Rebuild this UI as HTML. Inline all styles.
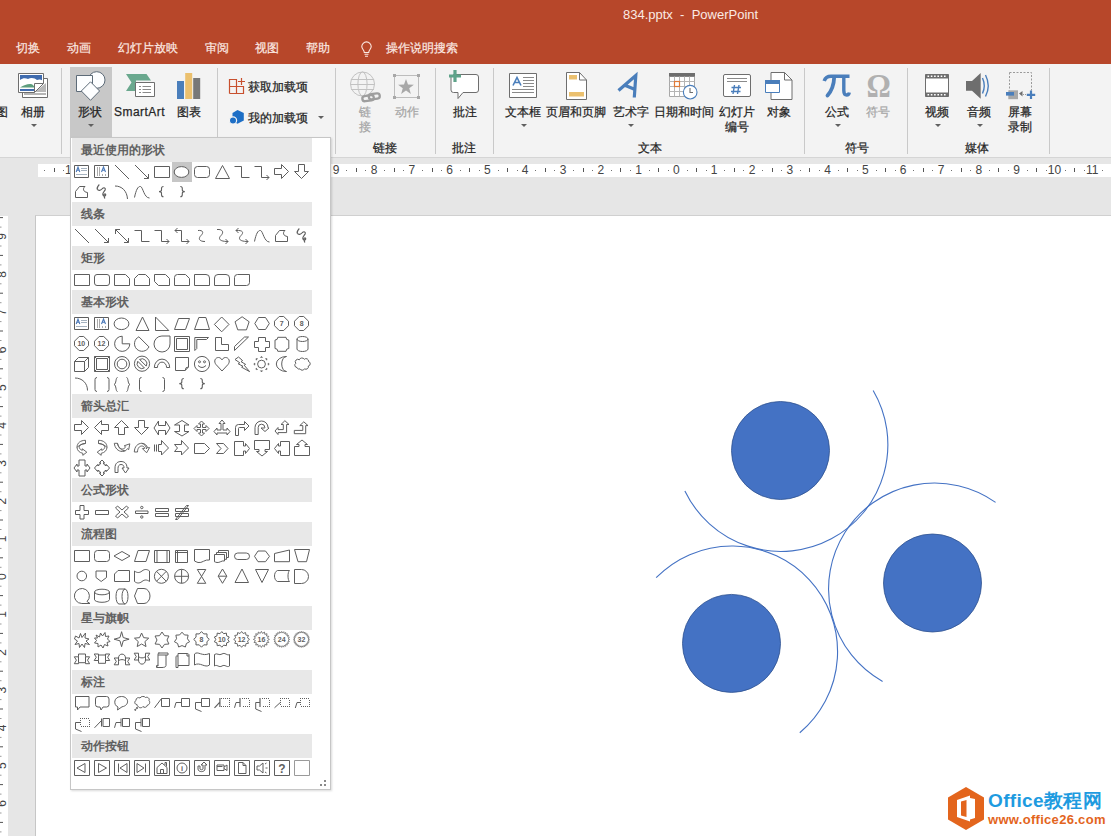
<!DOCTYPE html><html><head><meta charset="utf-8"><style>
*{box-sizing:border-box}
html,body{margin:0;padding:0}
body{width:1111px;height:836px;overflow:hidden;position:relative;background:#E6E6E6;font-family:"Liberation Sans",sans-serif;}
.a{position:absolute;white-space:nowrap}
.t12{font-size:12px;line-height:12px;color:#262626;-webkit-text-stroke:0.25px #262626}
.dis{color:#A6A6A6;-webkit-text-stroke:0.25px #A6A6A6}
.tab{font-size:12px;line-height:12px;color:#FBE9E3;-webkit-text-stroke:0.2px #FBE9E3}
.sep{position:absolute;width:1px;background:#C9C9C9}
.arr{position:absolute;width:0;height:0;border-left:3px solid transparent;border-right:3px solid transparent;border-top:3px solid #606060}
.hdr{position:absolute;left:72px;width:240px;height:24px;background:#E8E8E8;}
.hdr span{position:absolute;left:9px;top:6px;font-size:12px;line-height:12px;font-weight:bold;color:#606060}
</style></head><body>
<div class="a" style="left:0;top:0;width:1111px;height:64px;background:#B7472A"></div>
<div class="a" style="left:623px;top:8px;font-size:13px;line-height:14px;color:#FBEAE4">834.pptx&nbsp;&nbsp;-&nbsp;&nbsp;PowerPoint</div>
<div class="a tab" style="left:16px;top:42px">切换</div>
<div class="a tab" style="left:67px;top:42px">动画</div>
<div class="a tab" style="left:118px;top:42px">幻灯片放映</div>
<div class="a tab" style="left:205px;top:42px">审阅</div>
<div class="a tab" style="left:255px;top:42px">视图</div>
<div class="a tab" style="left:306px;top:42px">帮助</div>
<div class="a tab" style="left:386px;top:42px">操作说明搜索</div>
<svg class="a" style="left:357px;top:41px" width="20" height="18" viewBox="0 0 20 18"><path d="M7.3 11.5 C7.3 9 4.8 8 4.8 5.6 A4.7 4.7 0 0 1 14.2 5.6 C14.2 8 11.7 9 11.7 11.5 Z" fill="none" stroke="#FBE9E3" stroke-width="1.1"/><path d="M7.5 13.3 H11.5 M8 15.3 H11" stroke="#FBE9E3" stroke-width="1.1"/></svg>
<div class="a" style="left:0;top:64px;width:1111px;height:94px;background:#F3F3F3;border-bottom:1px solid #D5D5D5"></div>
<div class="sep" style="left:61px;top:68px;height:86px"></div>
<div class="sep" style="left:217px;top:68px;height:86px"></div>
<div class="sep" style="left:335px;top:68px;height:86px"></div>
<div class="sep" style="left:435px;top:68px;height:86px"></div>
<div class="sep" style="left:493px;top:68px;height:86px"></div>
<div class="sep" style="left:804px;top:68px;height:86px"></div>
<div class="sep" style="left:907px;top:68px;height:86px"></div>
<div class="sep" style="left:1049px;top:68px;height:86px"></div>
<div class="a" style="left:70px;top:67px;width:42px;height:71px;background:#C8C8C8"></div>
<div class="a t12" style="left:-4px;top:106px">图</div>
<div class="a t12" style="left:21px;top:106px">相册</div>
<div class="arr" style="left:31px;top:124px"></div>
<div class="a t12" style="left:78px;top:106px">形状</div>
<div class="arr" style="left:88px;top:124px"></div>
<div class="a t12" style="left:114px;top:106px;letter-spacing:0.45px">SmartArt</div>
<div class="a t12" style="left:177px;top:106px">图表</div>
<div class="a t12" style="left:248px;top:81px">获取加载项</div>
<div class="a t12" style="left:248px;top:112px">我的加载项</div>
<div class="arr" style="left:318px;top:116px"></div>
<div class="a t12 dis" style="left:359px;top:106px">链</div>
<div class="a t12 dis" style="left:359px;top:121px">接</div>
<div class="a t12 dis" style="left:395px;top:106px">动作</div>
<div class="a t12" style="left:373px;top:142px">链接</div>
<div class="a t12" style="left:453px;top:106px">批注</div>
<div class="a t12" style="left:452px;top:142px">批注</div>
<div class="a t12" style="left:505px;top:106px">文本框</div>
<div class="arr" style="left:521px;top:124px"></div>
<div class="a t12" style="left:546px;top:106px">页眉和页脚</div>
<div class="a t12" style="left:613px;top:106px">艺术字</div>
<div class="arr" style="left:628px;top:124px"></div>
<div class="a t12" style="left:654px;top:106px">日期和时间</div>
<div class="a t12" style="left:719px;top:106px">幻灯片</div>
<div class="a t12" style="left:725px;top:121px">编号</div>
<div class="a t12" style="left:767px;top:106px">对象</div>
<div class="a t12" style="left:638px;top:142px">文本</div>
<div class="a t12" style="left:825px;top:106px">公式</div>
<div class="arr" style="left:835px;top:124px"></div>
<div class="a t12 dis" style="left:866px;top:106px">符号</div>
<div class="a t12" style="left:845px;top:142px">符号</div>
<div class="a t12" style="left:925px;top:106px">视频</div>
<div class="arr" style="left:935px;top:124px"></div>
<div class="a t12" style="left:967px;top:106px">音频</div>
<div class="arr" style="left:977px;top:124px"></div>
<div class="a t12" style="left:1008px;top:106px">屏幕</div>
<div class="a t12" style="left:1008px;top:121px">录制</div>
<div class="a t12" style="left:965px;top:142px">媒体</div>
<div class="a" style="left:38px;top:164px;width:1073px;height:13px;background:#FFFFFF"></div>
<div class="a" style="left:35px;top:215px;width:1076px;height:621px;background:#FFFFFF;border-left:1px solid #C6C6C6;border-top:1px solid #D0D0D0"></div>
<div class="a" style="left:0;top:216px;width:8px;height:620px;background:#FFFFFF"></div>
<svg class="a" style="left:0;top:164px" width="1111" height="13" viewBox="0 164 1111 13"><rect x="44" y="170" width="1" height="1" fill="#707070"/><rect x="54" y="168" width="1" height="4" fill="#555"/><rect x="63" y="170" width="1" height="1" fill="#707070"/><text x="71.6" y="173.8" font-family="Liberation Sans" font-size="12" fill="#444" text-anchor="middle">16</text><rect x="82" y="170" width="1" height="1" fill="#707070"/><rect x="91" y="168" width="1" height="4" fill="#555"/><rect x="101" y="170" width="1" height="1" fill="#707070"/><text x="109.4" y="173.8" font-family="Liberation Sans" font-size="12" fill="#444" text-anchor="middle">15</text><rect x="120" y="170" width="1" height="1" fill="#707070"/><rect x="129" y="168" width="1" height="4" fill="#555"/><rect x="139" y="170" width="1" height="1" fill="#707070"/><text x="147.2" y="173.8" font-family="Liberation Sans" font-size="12" fill="#444" text-anchor="middle">14</text><rect x="157" y="170" width="1" height="1" fill="#707070"/><rect x="167" y="168" width="1" height="4" fill="#555"/><rect x="176" y="170" width="1" height="1" fill="#707070"/><text x="185.0" y="173.8" font-family="Liberation Sans" font-size="12" fill="#444" text-anchor="middle">13</text><rect x="195" y="170" width="1" height="1" fill="#707070"/><rect x="205" y="168" width="1" height="4" fill="#555"/><rect x="214" y="170" width="1" height="1" fill="#707070"/><text x="222.8" y="173.8" font-family="Liberation Sans" font-size="12" fill="#444" text-anchor="middle">12</text><rect x="233" y="170" width="1" height="1" fill="#707070"/><rect x="243" y="168" width="1" height="4" fill="#555"/><rect x="252" y="170" width="1" height="1" fill="#707070"/><text x="260.6" y="173.8" font-family="Liberation Sans" font-size="12" fill="#444" text-anchor="middle">11</text><rect x="271" y="170" width="1" height="1" fill="#707070"/><rect x="280" y="168" width="1" height="4" fill="#555"/><rect x="290" y="170" width="1" height="1" fill="#707070"/><text x="298.4" y="173.8" font-family="Liberation Sans" font-size="12" fill="#444" text-anchor="middle">10</text><rect x="309" y="170" width="1" height="1" fill="#707070"/><rect x="318" y="168" width="1" height="4" fill="#555"/><rect x="328" y="170" width="1" height="1" fill="#707070"/><text x="336.2" y="173.8" font-family="Liberation Sans" font-size="12" fill="#444" text-anchor="middle">9</text><rect x="346" y="170" width="1" height="1" fill="#707070"/><rect x="356" y="168" width="1" height="4" fill="#555"/><rect x="365" y="170" width="1" height="1" fill="#707070"/><text x="374.0" y="173.8" font-family="Liberation Sans" font-size="12" fill="#444" text-anchor="middle">8</text><rect x="384" y="170" width="1" height="1" fill="#707070"/><rect x="394" y="168" width="1" height="4" fill="#555"/><rect x="403" y="170" width="1" height="1" fill="#707070"/><text x="411.8" y="173.8" font-family="Liberation Sans" font-size="12" fill="#444" text-anchor="middle">7</text><rect x="422" y="170" width="1" height="1" fill="#707070"/><rect x="432" y="168" width="1" height="4" fill="#555"/><rect x="441" y="170" width="1" height="1" fill="#707070"/><text x="449.6" y="173.8" font-family="Liberation Sans" font-size="12" fill="#444" text-anchor="middle">6</text><rect x="460" y="170" width="1" height="1" fill="#707070"/><rect x="469" y="168" width="1" height="4" fill="#555"/><rect x="479" y="170" width="1" height="1" fill="#707070"/><text x="487.4" y="173.8" font-family="Liberation Sans" font-size="12" fill="#444" text-anchor="middle">5</text><rect x="498" y="170" width="1" height="1" fill="#707070"/><rect x="507" y="168" width="1" height="4" fill="#555"/><rect x="517" y="170" width="1" height="1" fill="#707070"/><text x="525.2" y="173.8" font-family="Liberation Sans" font-size="12" fill="#444" text-anchor="middle">4</text><rect x="535" y="170" width="1" height="1" fill="#707070"/><rect x="545" y="168" width="1" height="4" fill="#555"/><rect x="554" y="170" width="1" height="1" fill="#707070"/><text x="563.0" y="173.8" font-family="Liberation Sans" font-size="12" fill="#444" text-anchor="middle">3</text><rect x="573" y="170" width="1" height="1" fill="#707070"/><rect x="583" y="168" width="1" height="4" fill="#555"/><rect x="592" y="170" width="1" height="1" fill="#707070"/><text x="600.8" y="173.8" font-family="Liberation Sans" font-size="12" fill="#444" text-anchor="middle">2</text><rect x="611" y="170" width="1" height="1" fill="#707070"/><rect x="620" y="168" width="1" height="4" fill="#555"/><rect x="630" y="170" width="1" height="1" fill="#707070"/><text x="638.6" y="173.8" font-family="Liberation Sans" font-size="12" fill="#444" text-anchor="middle">1</text><rect x="649" y="170" width="1" height="1" fill="#707070"/><rect x="658" y="168" width="1" height="4" fill="#555"/><rect x="668" y="170" width="1" height="1" fill="#707070"/><text x="676.4" y="173.8" font-family="Liberation Sans" font-size="12" fill="#444" text-anchor="middle">0</text><rect x="687" y="170" width="1" height="1" fill="#707070"/><rect x="696" y="168" width="1" height="4" fill="#555"/><rect x="706" y="170" width="1" height="1" fill="#707070"/><text x="714.2" y="173.8" font-family="Liberation Sans" font-size="12" fill="#444" text-anchor="middle">1</text><rect x="724" y="170" width="1" height="1" fill="#707070"/><rect x="734" y="168" width="1" height="4" fill="#555"/><rect x="743" y="170" width="1" height="1" fill="#707070"/><text x="752.0" y="173.8" font-family="Liberation Sans" font-size="12" fill="#444" text-anchor="middle">2</text><rect x="762" y="170" width="1" height="1" fill="#707070"/><rect x="772" y="168" width="1" height="4" fill="#555"/><rect x="781" y="170" width="1" height="1" fill="#707070"/><text x="789.8" y="173.8" font-family="Liberation Sans" font-size="12" fill="#444" text-anchor="middle">3</text><rect x="800" y="170" width="1" height="1" fill="#707070"/><rect x="809" y="168" width="1" height="4" fill="#555"/><rect x="819" y="170" width="1" height="1" fill="#707070"/><text x="827.6" y="173.8" font-family="Liberation Sans" font-size="12" fill="#444" text-anchor="middle">4</text><rect x="838" y="170" width="1" height="1" fill="#707070"/><rect x="847" y="168" width="1" height="4" fill="#555"/><rect x="857" y="170" width="1" height="1" fill="#707070"/><text x="865.4" y="173.8" font-family="Liberation Sans" font-size="12" fill="#444" text-anchor="middle">5</text><rect x="876" y="170" width="1" height="1" fill="#707070"/><rect x="885" y="168" width="1" height="4" fill="#555"/><rect x="895" y="170" width="1" height="1" fill="#707070"/><text x="903.2" y="173.8" font-family="Liberation Sans" font-size="12" fill="#444" text-anchor="middle">6</text><rect x="913" y="170" width="1" height="1" fill="#707070"/><rect x="923" y="168" width="1" height="4" fill="#555"/><rect x="932" y="170" width="1" height="1" fill="#707070"/><text x="941.0" y="173.8" font-family="Liberation Sans" font-size="12" fill="#444" text-anchor="middle">7</text><rect x="951" y="170" width="1" height="1" fill="#707070"/><rect x="961" y="168" width="1" height="4" fill="#555"/><rect x="970" y="170" width="1" height="1" fill="#707070"/><text x="978.8" y="173.8" font-family="Liberation Sans" font-size="12" fill="#444" text-anchor="middle">8</text><rect x="989" y="170" width="1" height="1" fill="#707070"/><rect x="998" y="168" width="1" height="4" fill="#555"/><rect x="1008" y="170" width="1" height="1" fill="#707070"/><text x="1016.6" y="173.8" font-family="Liberation Sans" font-size="12" fill="#444" text-anchor="middle">9</text><rect x="1027" y="170" width="1" height="1" fill="#707070"/><rect x="1036" y="168" width="1" height="4" fill="#555"/><rect x="1046" y="170" width="1" height="1" fill="#707070"/><text x="1054.4" y="173.8" font-family="Liberation Sans" font-size="12" fill="#444" text-anchor="middle">10</text><rect x="1065" y="170" width="1" height="1" fill="#707070"/><rect x="1074" y="168" width="1" height="4" fill="#555"/><rect x="1084" y="170" width="1" height="1" fill="#707070"/><text x="1092.2" y="173.8" font-family="Liberation Sans" font-size="12" fill="#444" text-anchor="middle">11</text><rect x="1102" y="170" width="1" height="1" fill="#707070"/></svg><svg class="a" style="left:0;top:216px" width="8" height="620" viewBox="0 216 8 620"><text transform="translate(5.5 198.7) rotate(-90)" font-family="Liberation Sans" font-size="12" fill="#444" text-anchor="middle">10</text><rect x="0" y="207.7" width="1.5" height="1" fill="#999"/><rect x="0" y="217.1" width="3" height="1" fill="#555"/><rect x="0" y="226.6" width="1.5" height="1" fill="#999"/><text transform="translate(5.5 236.5) rotate(-90)" font-family="Liberation Sans" font-size="12" fill="#444" text-anchor="middle">9</text><rect x="0" y="245.5" width="1.5" height="1" fill="#999"/><rect x="0" y="254.9" width="3" height="1" fill="#555"/><rect x="0" y="264.4" width="1.5" height="1" fill="#999"/><text transform="translate(5.5 274.3) rotate(-90)" font-family="Liberation Sans" font-size="12" fill="#444" text-anchor="middle">8</text><rect x="0" y="283.3" width="1.5" height="1" fill="#999"/><rect x="0" y="292.7" width="3" height="1" fill="#555"/><rect x="0" y="302.2" width="1.5" height="1" fill="#999"/><text transform="translate(5.5 312.1) rotate(-90)" font-family="Liberation Sans" font-size="12" fill="#444" text-anchor="middle">7</text><rect x="0" y="321.1" width="1.5" height="1" fill="#999"/><rect x="0" y="330.5" width="3" height="1" fill="#555"/><rect x="0" y="340.0" width="1.5" height="1" fill="#999"/><text transform="translate(5.5 349.9) rotate(-90)" font-family="Liberation Sans" font-size="12" fill="#444" text-anchor="middle">6</text><rect x="0" y="358.9" width="1.5" height="1" fill="#999"/><rect x="0" y="368.3" width="3" height="1" fill="#555"/><rect x="0" y="377.8" width="1.5" height="1" fill="#999"/><text transform="translate(5.5 387.7) rotate(-90)" font-family="Liberation Sans" font-size="12" fill="#444" text-anchor="middle">5</text><rect x="0" y="396.7" width="1.5" height="1" fill="#999"/><rect x="0" y="406.1" width="3" height="1" fill="#555"/><rect x="0" y="415.6" width="1.5" height="1" fill="#999"/><text transform="translate(5.5 425.5) rotate(-90)" font-family="Liberation Sans" font-size="12" fill="#444" text-anchor="middle">4</text><rect x="0" y="434.5" width="1.5" height="1" fill="#999"/><rect x="0" y="443.9" width="3" height="1" fill="#555"/><rect x="0" y="453.4" width="1.5" height="1" fill="#999"/><text transform="translate(5.5 463.3) rotate(-90)" font-family="Liberation Sans" font-size="12" fill="#444" text-anchor="middle">3</text><rect x="0" y="472.3" width="1.5" height="1" fill="#999"/><rect x="0" y="481.7" width="3" height="1" fill="#555"/><rect x="0" y="491.2" width="1.5" height="1" fill="#999"/><text transform="translate(5.5 501.1) rotate(-90)" font-family="Liberation Sans" font-size="12" fill="#444" text-anchor="middle">2</text><rect x="0" y="510.1" width="1.5" height="1" fill="#999"/><rect x="0" y="519.5" width="3" height="1" fill="#555"/><rect x="0" y="529.0" width="1.5" height="1" fill="#999"/><text transform="translate(5.5 538.9) rotate(-90)" font-family="Liberation Sans" font-size="12" fill="#444" text-anchor="middle">1</text><rect x="0" y="547.9" width="1.5" height="1" fill="#999"/><rect x="0" y="557.3" width="3" height="1" fill="#555"/><rect x="0" y="566.8" width="1.5" height="1" fill="#999"/><text transform="translate(5.5 576.7) rotate(-90)" font-family="Liberation Sans" font-size="12" fill="#444" text-anchor="middle">0</text><rect x="0" y="585.7" width="1.5" height="1" fill="#999"/><rect x="0" y="595.1" width="3" height="1" fill="#555"/><rect x="0" y="604.6" width="1.5" height="1" fill="#999"/><text transform="translate(5.5 614.5) rotate(-90)" font-family="Liberation Sans" font-size="12" fill="#444" text-anchor="middle">1</text><rect x="0" y="623.5" width="1.5" height="1" fill="#999"/><rect x="0" y="632.9" width="3" height="1" fill="#555"/><rect x="0" y="642.4" width="1.5" height="1" fill="#999"/><text transform="translate(5.5 652.3) rotate(-90)" font-family="Liberation Sans" font-size="12" fill="#444" text-anchor="middle">2</text><rect x="0" y="661.3" width="1.5" height="1" fill="#999"/><rect x="0" y="670.7" width="3" height="1" fill="#555"/><rect x="0" y="680.2" width="1.5" height="1" fill="#999"/><text transform="translate(5.5 690.1) rotate(-90)" font-family="Liberation Sans" font-size="12" fill="#444" text-anchor="middle">3</text><rect x="0" y="699.1" width="1.5" height="1" fill="#999"/><rect x="0" y="708.5" width="3" height="1" fill="#555"/><rect x="0" y="718.0" width="1.5" height="1" fill="#999"/><text transform="translate(5.5 727.9) rotate(-90)" font-family="Liberation Sans" font-size="12" fill="#444" text-anchor="middle">4</text><rect x="0" y="736.9" width="1.5" height="1" fill="#999"/><rect x="0" y="746.3" width="3" height="1" fill="#555"/><rect x="0" y="755.8" width="1.5" height="1" fill="#999"/><text transform="translate(5.5 765.7) rotate(-90)" font-family="Liberation Sans" font-size="12" fill="#444" text-anchor="middle">5</text><rect x="0" y="774.7" width="1.5" height="1" fill="#999"/><rect x="0" y="784.1" width="3" height="1" fill="#555"/><rect x="0" y="793.6" width="1.5" height="1" fill="#999"/><text transform="translate(5.5 803.5) rotate(-90)" font-family="Liberation Sans" font-size="12" fill="#444" text-anchor="middle">6</text><rect x="0" y="812.5" width="1.5" height="1" fill="#999"/><rect x="0" y="821.9" width="3" height="1" fill="#555"/><rect x="0" y="831.4" width="1.5" height="1" fill="#999"/><text transform="translate(5.5 841.3) rotate(-90)" font-family="Liberation Sans" font-size="12" fill="#444" text-anchor="middle">7</text><rect x="0" y="850.2" width="1.5" height="1" fill="#999"/><rect x="0" y="859.7" width="3" height="1" fill="#555"/><rect x="0" y="869.1" width="1.5" height="1" fill="#999"/></svg>
<svg class="a" style="left:0;top:0" width="1111" height="836" viewBox="0 0 1111 836"><circle cx="780.5" cy="450.5" r="49" fill="#4472C4" stroke="#2F528F" stroke-width="0.8"/><circle cx="932.5" cy="583" r="49" fill="#4472C4" stroke="#2F528F" stroke-width="0.8"/><circle cx="731.5" cy="643.4" r="49" fill="#4472C4" stroke="#2F528F" stroke-width="0.8"/><path d="M873.16 390.54 A106.80 106.80 0 1 1 684.87 491.02" fill="none" stroke="#4472C4" stroke-width="1.1"/><path d="M995.59 502.37 A106.00 106.00 0 1 0 882.60 681.43" fill="none" stroke="#4472C4" stroke-width="1.1"/><path d="M656.15 577.73 A105.80 105.80 0 1 1 799.78 732.77" fill="none" stroke="#4472C4" stroke-width="1.1"/></svg>
<div class="a" style="left:943px;top:783px;width:161px;height:50px;background:#fff"></div><svg class="a" style="left:946px;top:786px" width="40" height="45" viewBox="0 0 40 45"><path d="M20 1 L38 11.5 V33.5 L20 44 L2 33.5 V11.5 Z" fill="#E3651D"/><path d="M11 14 L24 9.5 V35.5 L11 31 Z" fill="#fff"/><path d="M15 15.5 L20.5 14 V31 L15 29.5 Z" fill="#E3651D"/><path d="M24 12 L29 13 V32 L24 33.5 Z" fill="#fff"/></svg><div class="a" style="left:988px;top:791px;font-size:19px;line-height:20px;font-weight:bold;color:#1E9BE0;letter-spacing:0.35px">Office教程网</div><div class="a" style="left:988px;top:813px;font-size:13px;line-height:13px;font-weight:bold;color:#E3651D;letter-spacing:0.3px">www.office26.com</div>
<div class="a" style="left:70px;top:137px;width:261px;height:653px;background:#FFFFFF;border:1px solid #C6C6C6;box-shadow:1px 1px 2px rgba(0,0,0,0.15)"></div>
<div class="hdr" style="top:138px"><span>最近使用的形状</span></div>
<div class="hdr" style="top:202px"><span>线条</span></div>
<div class="hdr" style="top:246px"><span>矩形</span></div>
<div class="hdr" style="top:290px"><span>基本形状</span></div>
<div class="hdr" style="top:394px"><span>箭头总汇</span></div>
<div class="hdr" style="top:478px"><span>公式形状</span></div>
<div class="hdr" style="top:522px"><span>流程图</span></div>
<div class="hdr" style="top:606px"><span>星与旗帜</span></div>
<div class="hdr" style="top:670px"><span>标注</span></div>
<div class="hdr" style="top:734px"><span>动作按钮</span></div>
<div class="a" style="left:172px;top:162px;width:20px;height:20px;background:#C6C6C6"></div>
<svg class="a" style="left:0;top:64px" width="1111" height="94" viewBox="0 64 1111 94"><g fill="none" stroke-width="1"><path d="M22.5 78.5 H47.5 V97.5 H22.5 Z" fill="#fff" stroke="#6E6E6E"/><path d="M24 94 H46" stroke="#9C9C9C" stroke-width="1.5"/><path d="M35 92 L46 83 V92 Z" fill="#B8B8B8"/><path d="M18.5 73.5 H43.5 V83.5 L34.5 92.5 H18.5 Z" fill="#fff" stroke="#6E6E6E"/><path d="M20 75 H42 V80.5 H20 Z" fill="#3F6BAE"/><path d="M20 80 C23 77.5 26 78 28 79 C31 77 35 78 37 80 C39 79 41 79.5 42 80.5 V83 H20 Z" fill="#fff"/><path d="M20 87.5 C24 85 28 83.5 31 84 C33 84.5 34 86 35 87.5 Z" fill="#5E9E7E"/><path d="M20 89 H34 V91 H20 Z" fill="#3F6BAE"/><path d="M34.5 92.5 V83.5 H43.5" stroke="#6E6E6E"/><circle cx="96.7" cy="80" r="8.3" fill="#fdfeff" stroke="#5D6B78"/><path d="M76.5 75.5 H92.5 V91.5 H76.5 Z" fill="#fdfeff" stroke="#5D6B78"/><path d="M90.5 81.8 L99.6 91 L90.5 100.3 L81.3 91 Z" fill="#fdfeff" stroke="#5D6B78"/><path d="M126 74 H146.5 L151 80.5 H136 V91 H126 L131.5 82.5 Z" fill="#6AA88E"/><path d="M135.5 82.5 H154.5 V96.5 H135.5 Z" fill="#fff" stroke="#6E6E6E"/><path d="M139 86.5 H141 M142.5 86.5 H151 M139 89.5 H141 M142.5 89.5 H151 M139 92.5 H141 M142.5 92.5 H151" stroke="#8A8A8A"/><rect x="177" y="81" width="7" height="18" fill="#4A7EBB"/><rect x="185.2" y="73" width="7" height="26" fill="#EBC06E"/><rect x="193.2" y="78" width="7" height="21" fill="#787878"/><path d="M229.5 93.5 V79.5 H236.5 V93.5 M229.5 86.5 H243.5 V93.5 H229.5 M241.5 78 V85 M238 81.5 H245" stroke="#C8502E" stroke-width="1.2"/><path d="M237.5 110 L243.8 113 V120.5 L237.5 123.8 L232.5 121 V113 Z" fill="#1E6FC6"/><circle cx="233" cy="120.5" r="3.6" fill="#1E6FC6" stroke="#F3F3F3" stroke-width="1.2"/><g stroke="#C2C2C2" stroke-width="1"><circle cx="362.5" cy="84" r="12"/><ellipse cx="362.5" cy="84" rx="4.6" ry="12"/><path d="M351 79.5 H374 M350.5 84.5 H374.5 M351 89.5 H374"/></g><path d="M365 94 H360.5" stroke="none"/><g stroke="#9E9E9E" stroke-width="2.3" fill="none"><rect x="362.3" y="95.6" width="11.5" height="5.2" rx="2.6" transform="rotate(-8 368 98)"/><rect x="368.8" y="93.8" width="11" height="5.2" rx="2.6" transform="rotate(-8 374 96.4)"/></g><path d="M394.5 75.5 H418.5 M394.5 97.5 H418.5 M394.5 75.5 V97.5 M418.5 75.5 V97.5" stroke="#BDBDBD"/><rect x="393" y="74" width="3" height="3" fill="#A8A8A8"/><rect x="417" y="74" width="3" height="3" fill="#A8A8A8"/><rect x="393" y="96" width="3" height="3" fill="#A8A8A8"/><rect x="417" y="96" width="3" height="3" fill="#A8A8A8"/><path d="M406.00 78.90 L408.00 84.45 L413.89 84.64 L409.23 88.25 L410.88 93.91 L406.00 90.60 L401.12 93.91 L402.77 88.25 L398.11 84.64 L404.00 84.45 Z" fill="#A8A8A8"/><path d="M453.5 74.5 H476 Q478.5 74.5 478.5 77 V90 Q478.5 92.5 476 92.5 H463 L458 98.5 V92.5 H453.5 Q451 92.5 451 90 V77 Z" fill="#fff" stroke="#6E6E6E"/><path d="M455 70 V82 M449 76 H461" stroke="#5FA38A" stroke-width="3.2"/><path d="M509.5 73.5 H536.5 V97.5 H509.5 Z" fill="#fff" stroke="#6E6E6E"/><path d="M513 85.5 L517 77.5 L521 85.5 M514.5 82.5 H519.5" stroke="#4A7EBB" stroke-width="1.6"/><path d="M523 77.5 H534 M523 80.5 H534 M523 83.5 H534 M523 86.5 H534 M512 89.5 H534 M512 92.5 H534" stroke="#8A8A8A"/><path d="M566.5 72.5 H579.5 L586.5 80 V99.5 H566.5 Z" fill="#fff" stroke="#6E6E6E"/><path d="M579.5 72.5 V80 H586.5" stroke="#6E6E6E"/><rect x="569" y="75" width="8" height="4.5" fill="#EBC06E"/><rect x="569" y="92" width="15" height="4.5" fill="#EBC06E"/><path d="M618.5 90.5 L635.8 75.5 L634.3 97.5 M625.5 85.5 L635 89.5" stroke="#4A7EBB" stroke-width="3.2" stroke-linecap="butt"/><path d="M669.5 76.5 H694.5 V96.5 H669.5 Z" fill="#fff" stroke="#A8A8A8"/><rect x="669" y="73" width="26" height="3.6" fill="#6E6E6E"/><path d="M674.5 76.5 V96.5 M679.5 76.5 V96.5 M684.5 76.5 V96.5 M689.5 76.5 V96.5 M669.5 81.5 H694.5 M669.5 86.5 H694.5 M669.5 91.5 H694.5" stroke="#B5B5B5"/><rect x="674.5" y="81.5" width="5" height="5" stroke="#E07B39" stroke-width="1.2" fill="#fff"/><circle cx="690.2" cy="92.2" r="6.8" fill="#fff" stroke="#4A7EBB" stroke-width="1.1"/><path d="M690 88 V92.5 H693" stroke="#6E6E6E" stroke-width="1.1"/><rect x="723.5" y="74.5" width="27" height="22" rx="1.5" fill="#fff" stroke="#6E6E6E"/><path d="M727 78.5 H747 M727 81.5 H747" stroke="#8A8A8A"/><path d="M734.5 85 L733 94 M739 85 L737.5 94 M731.5 87.5 H741 M731 91.5 H740.5" stroke="#4A7EBB" stroke-width="1.4"/><path d="M771 72.5 H784.5 L792 80 V99.5 H771 Z" fill="#fff" stroke="#6E6E6E"/><path d="M784.5 72.5 V80 H792" stroke="#6E6E6E"/><path d="M765.5 80.5 H779.5 V92.5 H765.5 Z" fill="#fff" stroke="#4A7EBB"/><rect x="765" y="80" width="15" height="4" fill="#4A7EBB"/><path d="M824.2 81 Q825.8 76.3 831 76.3 H849.5" stroke="#4A7EBB" stroke-width="3.6"/><path d="M834.2 77 Q833.8 88.5 827.5 95.5" stroke="#4A7EBB" stroke-width="3.8" stroke-linecap="round"/><path d="M843.8 77 V90.5 Q843.8 95 846.8 95 Q848.8 95 849.3 92.5" stroke="#4A7EBB" stroke-width="3.4"/><text x="0" y="0" transform="translate(878.7 97.3) scale(0.92 1)" font-family="Liberation Serif" font-size="33" font-weight="bold" fill="#B0B0B0" text-anchor="middle" stroke="none">Ω</text><path d="M925.5 74.5 H948.5 V96.5 H925.5 Z M925.5 78 H948.5 M925.5 93 H948.5" fill="#fff" stroke="#6E6E6E"/><path d="M925.5 76.2 H948.5 M925.5 94.8 H948.5" stroke="#6E6E6E" stroke-width="3.4"/><path d="M927.5 76.2 H947 M927.5 94.8 H947" stroke="#fff" stroke-width="1.4" stroke-dasharray="1.6 1.7"/><path d="M966 81 H972 L980.7 73 V98.8 L972 90.7 H966 Z" fill="#6E6E6E"/><path d="M982.5 78 Q986 85.8 982.5 93.5 M985.5 75 Q991 85.8 985.5 96.5" stroke="#4A7EBB" stroke-width="1.4"/><path d="M1009.5 72.5 H1031.5 V90.5 M1009.5 72.5 V90.5" stroke="#9A9A9A" stroke-dasharray="2 1.5"/><rect x="1008.3" y="90.3" width="9.7" height="8.9" fill="#A8A8A8"/><rect x="1006" y="92" width="8" height="3.6" fill="#4A7EBB"/><path d="M1019 93.5 L1022.5 91 V96.5 Z" fill="#6E6E6E"/><path d="M1023 94.5 H1027" stroke="#9A9A9A" stroke-dasharray="1 1"/><path d="M1031 90.5 V99 M1026.8 94.8 H1035.2" stroke="#4A7EBB" stroke-width="2.2"/></g></svg>
<svg class="a" style="left:0;top:0" width="1111" height="836" viewBox="0 0 1111 836"><g fill="none" stroke="#5E5E5E" stroke-width="1" stroke-linejoin="miter"><g transform="translate(72 162)"><path d="M2.5 3.5 H16.5 V15.5 H2.5 Z" /><path d="M4.2 10 L6 5 L7.8 10 M4.9 8.3 H7.1" stroke="#4A78B8" stroke-width="1.1"/><path d="M9 6.5 H15 M9 8.5 H15 M4 12.5 H15" stroke="#9BA9B8" stroke-width="0.9"/></g><g transform="translate(92 162)"><path d="M2.5 3.5 H16.5 V15.5 H2.5 Z" /><path d="M5.5 5 V14 M7.5 5 V14" stroke="#A2A2A2" stroke-width="0.9"/><path d="M9.5 10 L11.5 5 L13.5 10 M10.2 8.3 H12.8" stroke="#4A78B8" stroke-width="1.1"/><path d="M10.5 12 V14 M13.5 12 V14" stroke="#A2A2A2" stroke-width="0.9"/></g><g transform="translate(112 162)"><path d="M3 3 L17 17" /></g><g transform="translate(132 162)"><path d="M3 3 L16.5 16.5 M16.5 12 V16.5 H12" /></g><g transform="translate(152 162)"><path d="M2.5 4.5 H17.5 V15.5 H2.5 Z" /></g><g transform="translate(172 162)"><ellipse cx="9.5" cy="10" rx="7.3" ry="5.4" fill="#fff"/></g><g transform="translate(192 162)"><rect x="2.5" y="4.5" width="15" height="11" rx="3"/></g><g transform="translate(212 162)"><path d="M10.5 3.5 L17.5 16.5 H3.5 Z" /></g><g transform="translate(232 162)"><path d="M2.5 4.5 H9.5 V15.5 H17.5" /></g><g transform="translate(252 162)"><path d="M2.5 4.5 H9.5 V15.5 H17 M14.5 13 L17 15.5 L14.5 18" /></g><g transform="translate(272 162)"><path d="M2.5 6.5 H9.5 V2.5 L16.5 9.5 L9.5 16.5 V12.5 H2.5 Z" /></g><g transform="translate(292 162)"><path d="M6.5 2.5 V9.5 H2.5 L9.5 16.5 L16.5 9.5 H12.5 V2.5 Z" /></g><g transform="translate(72 182)"><path d="M3.5 15.5 V9.5 L7.5 4.5 H13 C10.5 6.5 11 10 15.5 10.5 V15.5 Z" /></g><g transform="translate(92 182)"><path d="M7.3 2.5 C6 4 4.5 5.5 5.3 7.3 C6.3 9 9 8.5 10.5 6.5 C12 5 13.8 6 13.2 7.8 C12.6 9.3 10.5 10.5 10.8 12.5 C11 14.3 13.8 14.5 13.7 12.8 C13.6 11.3 11.5 11.8 12 13.8 L12.8 16.5" stroke-width="1.2"/></g><g transform="translate(112 182)"><path d="M3 4 C10 4 15 9 15.5 17" /></g><g transform="translate(132 182)"><path d="M2.5 15.5 C4 8 6 4 8.5 4.5 C11 5 12 16 17.5 16" /></g><g transform="translate(152 182)"><path d="M11.5 4.5 Q9.5 4.5 9.5 6.5 V8 Q9.5 9.6 7 9.6 Q9.5 9.6 9.5 11.2 V12.8 Q9.5 14.8 11.5 14.8" stroke-width="1.1"/></g><g transform="translate(172 182)"><path d="M8.3 4.5 Q10.3 4.5 10.3 6.5 V8 Q10.3 9.6 12.8 9.6 Q10.3 9.6 10.3 11.2 V12.8 Q10.3 14.8 8.3 14.8" stroke-width="1.1"/></g><g transform="translate(72 226)"><path d="M3 3 L17 17" /></g><g transform="translate(92 226)"><path d="M3 3 L16.5 16.5 M16.5 12 V16.5 H12" /></g><g transform="translate(112 226)"><path d="M3.5 3.5 L16.5 16.5 M16.5 12 V16.5 H12 M3.5 8 V3.5 H8" /></g><g transform="translate(132 226)"><path d="M2.5 4.5 H9.5 V15.5 H17.5" /></g><g transform="translate(152 226)"><path d="M2.5 4.5 H9.5 V15.5 H17 M14.5 13 L17 15.5 L14.5 18" /></g><g transform="translate(172 226)"><path d="M3 4.5 H9.5 V15.5 H17 M14.5 13 L17 15.5 L14.5 18 M5.5 2 L3 4.5 L5.5 7" /></g><g transform="translate(192 226)"><path d="M6 4.5 C11 4 12 6.5 9 9.5 C6 12.5 7 15.5 13 15.5" /></g><g transform="translate(212 226)"><path d="M5 3.5 C11 3 12 6.5 9 9.5 C6 12.5 7 15.5 16 15.5 M13.5 13 L16 15.5 L13.5 18" /></g><g transform="translate(232 226)"><path d="M4 4.5 C11 4 12 6.5 9 9.5 C6 12.5 7 15.5 16 15.5 M13.5 13 L16 15.5 L13.5 18 M6.5 2 L4 4.5 L6.5 7" /></g><g transform="translate(252 226)"><path d="M2.5 15.5 C4 8 6 4 8.5 4.5 C11 5 12 16 17.5 16" /></g><g transform="translate(272 226)"><path d="M3.5 15.5 V9.5 L7.5 4.5 H13 C10.5 6.5 11 10 15.5 10.5 V15.5 Z" /></g><g transform="translate(292 226)"><path d="M7.3 2.5 C6 4 4.5 5.5 5.3 7.3 C6.3 9 9 8.5 10.5 6.5 C12 5 13.8 6 13.2 7.8 C12.6 9.3 10.5 10.5 10.8 12.5 C11 14.3 13.8 14.5 13.7 12.8 C13.6 11.3 11.5 11.8 12 13.8 L12.8 16.5" stroke-width="1.2"/></g><g transform="translate(72 270)"><path d="M2.5 4.5 H17.5 V15.5 H2.5 Z" /></g><g transform="translate(92 270)"><rect x="2.5" y="4.5" width="15" height="11" rx="2.5"/></g><g transform="translate(112 270)"><path d="M2.5 4.5 H13.5 L17.5 8.5 V15.5 H2.5 Z" /></g><g transform="translate(132 270)"><path d="M6.5 4.5 H13.5 L17.5 8.5 V15.5 H2.5 V8.5 Z" /></g><g transform="translate(152 270)"><path d="M2.5 4.5 H13.5 L17.5 8.5 V15.5 H6.5 L2.5 11.5 Z" /></g><g transform="translate(172 270)"><path d="M2.5 15.5 V7.5 Q2.5 4.5 5.5 4.5 H13.5 L17.5 8.5 V15.5 Z" /></g><g transform="translate(192 270)"><path d="M2.5 4.5 H14 Q17.5 4.5 17.5 8 V15.5 H2.5 Z" /></g><g transform="translate(212 270)"><path d="M2.5 15.5 V8 Q2.5 4.5 6 4.5 H14 Q17.5 4.5 17.5 8 V15.5 Z" /></g><g transform="translate(232 270)"><path d="M2.5 15.5 V7.5 Q2.5 4.5 5.5 4.5 H17.5 V12.5 Q17.5 15.5 14.5 15.5 Z" /></g><g transform="translate(72 314)"><path d="M2.5 3.5 H16.5 V15.5 H2.5 Z" /><path d="M4.2 10 L6 5 L7.8 10 M4.9 8.3 H7.1" stroke="#4A78B8" stroke-width="1.1"/><path d="M9 6.5 H15 M9 8.5 H15 M4 12.5 H15" stroke="#9BA9B8" stroke-width="0.9"/></g><g transform="translate(92 314)"><path d="M2.5 3.5 H16.5 V15.5 H2.5 Z" /><path d="M5.5 5 V14 M7.5 5 V14" stroke="#A2A2A2" stroke-width="0.9"/><path d="M9.5 10 L11.5 5 L13.5 10 M10.2 8.3 H12.8" stroke="#4A78B8" stroke-width="1.1"/><path d="M10.5 12 V14 M13.5 12 V14" stroke="#A2A2A2" stroke-width="0.9"/></g><g transform="translate(112 314)"><ellipse cx="9.5" cy="9.8" rx="7.4" ry="5.8"/></g><g transform="translate(132 314)"><path d="M10.5 3 L17 16.5 H4 Z" /></g><g transform="translate(152 314)"><path d="M3.5 3 V16.5 H16.8 Z" /></g><g transform="translate(172 314)"><path d="M6.5 4.5 H17.5 L13.5 15.5 H2.5 Z" /></g><g transform="translate(192 314)"><path d="M6.8 3.5 H13.9 L17.5 15.5 H2.5 Z" /></g><g transform="translate(212 314)"><path d="M9.7 3 L17 10.4 L9.7 17.8 L2.4 10.4 Z" /></g><g transform="translate(232 314)"><path d="M10.10 2.75 L17.14 7.76 L14.45 15.87 L5.75 15.87 L3.06 7.76 Z" /></g><g transform="translate(252 314)"><path d="M6.5 3.5 H13.5 L17.3 9.5 L13.5 15.5 H6.5 L2.8 9.5 Z" /></g><g transform="translate(272 314)"><path d="M7.2 2.5 H11.7 L16.5 7.2 V11.7 L11.7 16.5 H7.2 L2.5 11.7 V7.2 Z" /><text x="9.6" y="12.1" font-size="7" font-family="Liberation Sans" font-weight="bold" fill="#5E5E5E" stroke="none" text-anchor="middle">7</text></g><g transform="translate(292 314)"><path d="M7.2 2.5 H11.7 L16.5 7.2 V11.7 L11.7 16.5 H7.2 L2.5 11.7 V7.2 Z" /><text x="9.6" y="12.1" font-size="7" font-family="Liberation Sans" font-weight="bold" fill="#5E5E5E" stroke="none" text-anchor="middle">8</text></g><g transform="translate(72 334)"><path d="M7.2 2.5 H11.7 L16.5 7.2 V11.7 L11.7 16.5 H7.2 L2.5 11.7 V7.2 Z" /><text x="9.3" y="12" font-size="7" font-family="Liberation Sans" font-weight="bold" fill="#5E5E5E" stroke="none" text-anchor="middle">10</text></g><g transform="translate(92 334)"><path d="M7.2 2.5 H11.7 L16.5 7.2 V11.7 L11.7 16.5 H7.2 L2.5 11.7 V7.2 Z" /><text x="9.5" y="12" font-size="7" font-family="Liberation Sans" font-weight="bold" fill="#5E5E5E" stroke="none" text-anchor="middle">12</text></g><g transform="translate(112 334)"><path d="M10.2 9.8 H17.8 A7.6 7.6 0 1 1 10.2 2.2 Z" /></g><g transform="translate(132 334)"><path d="M6.89 2.81 L16.99 12.91 A7.6 7.6 0 1 1 6.89 2.81 Z" /></g><g transform="translate(152 334)"><path d="M9.9 2 H18 V9.9 A8 8 0 1 1 9.9 2 Z" /></g><g transform="translate(172 334)"><path d="M2.5 2.5 H17.5 V17.5 H2.5 Z M4.5 4.5 H15.5 V15.5 H4.5 Z" /></g><g transform="translate(192 334)"><path d="M2.8 16.5 V3.5 H16.5 L14.5 5.5 H4.8 V14.5 Z" /></g><g transform="translate(212 334)"><path d="M3.5 3.5 H9.5 V10.5 H16.5 V16.5 H3.5 Z" /></g><g transform="translate(232 334)"><path d="M2.5 16.5 V12.5 L12.5 3 H16.5 Z" /></g><g transform="translate(252 334)"><path d="M6.5 3.5 H13.5 V7.5 H17.5 V13.5 H13.5 V17.5 H6.5 V13.5 H2.5 V7.5 H6.5 Z" /></g><g transform="translate(272 334)"><path d="M5.8 3.3 H14 A2.8 2.8 0 0 0 16.8 6.1 V14.5 A2.8 2.8 0 0 0 14 17.3 H5.8 A2.8 2.8 0 0 0 3 14.5 V6.1 A2.8 2.8 0 0 0 5.8 3.3 Z" /></g><g transform="translate(292 334)"><path d="M5 5 V15 A5.5 2.5 0 0 0 16 15 V5" /><ellipse cx="10.5" cy="5" rx="5.5" ry="2.5"/></g><g transform="translate(72 354)"><path d="M2.5 7.5 H12.5 V17.5 H2.5 Z M2.5 7.5 L6.5 3.5 H16.5 V13.5 L12.5 17.5 M12.5 7.5 L16.5 3.5" /></g><g transform="translate(92 354)"><path d="M2.5 2.5 H17.5 V17.5 H2.5 Z M4.5 4.5 H15.5 V15.5 H4.5 Z M2.5 2.5 L4.5 4.5 M17.5 2.5 L15.5 4.5 M2.5 17.5 L4.5 15.5 M17.5 17.5 L15.5 15.5" /></g><g transform="translate(112 354)"><circle cx="10" cy="10" r="7.5"/><circle cx="10" cy="10" r="4.8"/></g><g transform="translate(132 354)"><circle cx="10" cy="9.7" r="7.6"/><path d="M7.58 5.44 L14.26 12.12 A4.9 4.9 0 0 0 7.58 5.44 Z M5.74 7.28 L12.42 13.96 A4.9 4.9 0 0 1 5.74 7.28 Z" /></g><g transform="translate(152 354)"><path d="M2.3 13.5 A7.7 8.4 0 0 1 17.7 13.5 H14.6 A4.6 5.4 0 0 0 5.4 13.5 Z" /></g><g transform="translate(172 354)"><path d="M3.5 3.5 H16.5 V13 L13.2 16.5 H3.5 Z M13.2 16.5 L14 13.8 L16.5 13" /></g><g transform="translate(192 354)"><circle cx="10" cy="10" r="7.6"/><circle cx="7.5" cy="7.8" r="1"/><circle cx="12.5" cy="7.8" r="1"/><path d="M6 11.5 Q10 15.5 14 11.5" /></g><g transform="translate(212 354)"><path d="M10 17 L4 10.5 C1.5 7.5 3 3.5 6.5 3.5 C8.5 3.5 9.5 5 10 6 C10.5 5 11.5 3.5 13.5 3.5 C17 3.5 18.5 7.5 16 10.5 Z" /></g><g transform="translate(232 354)"><path d="M3 5.5 L6.5 3 L10.6 6.6 L9 7.6 L13.6 10.4 L12.2 11.2 L17.6 17.6 L9.6 13.2 L11 12.3 L6.2 9.8 L7.8 8.8 Z" /></g><g transform="translate(252 354)"><circle cx="9.5" cy="10.1" r="3.9"/><path d="M9.50 2.30 L10.60 3.50 L8.40 3.50 Z M15.02 4.58 L14.94 6.21 L13.39 4.66 Z M17.30 10.10 L16.10 11.20 L16.10 9.00 Z M15.02 15.62 L13.39 15.54 L14.94 13.99 Z M9.50 17.90 L8.40 16.70 L10.60 16.70 Z M3.98 15.62 L4.06 13.99 L5.61 15.54 Z M1.70 10.10 L2.90 9.00 L2.90 11.20 Z M3.98 4.58 L5.61 4.66 L4.06 6.21 Z" fill="#5E5E5E" stroke-width="0.5"/></g><g transform="translate(272 354)"><path d="M14.5 2.5 A10.2 7.5 0 0 0 14.5 17.5 A4.8 7.5 0 0 1 14.5 2.5 Z" /></g><g transform="translate(292 354)"><path d="M5 13.5 A2.3 2.3 0 0 1 3.8 9.3 A2.5 2.5 0 0 1 7.3 5.8 A2.8 2.8 0 0 1 12.3 5.3 A2.5 2.5 0 0 1 16.5 7.5 A2.3 2.3 0 0 1 16.3 12 A2.5 2.5 0 0 1 12.5 14.8 A2.5 2.5 0 0 1 8 14.8 A2 2 0 0 1 5 13.5 Z" /></g><g transform="translate(72 374)"><path d="M3 4 C10 4 15.5 9 15.5 16.5" /></g><g transform="translate(92 374)"><path d="M5 3.5 Q3 3.5 3 5.5 V15.5 Q3 17.5 5 17.5 M15 3.5 Q17 3.5 17 5.5 V15.5 Q17 17.5 15 17.5" /></g><g transform="translate(112 374)"><path d="M5.5 3.5 C3.5 3.5 4.5 10 2 10.5 C4.5 11 3.5 17.5 5.5 17.5 M14.5 3.5 C16.5 3.5 15.5 10 18 10.5 C15.5 11 16.5 17.5 14.5 17.5" /></g><g transform="translate(132 374)"><path d="M9.5 3.5 Q7.5 3.5 7.5 5.5 V15.5 Q7.5 17.5 9.5 17.5" /></g><g transform="translate(152 374)"><path d="M10.5 3.5 Q12.5 3.5 12.5 5.5 V15.5 Q12.5 17.5 10.5 17.5" /></g><g transform="translate(172 374)"><path d="M11.8 4.5 Q9.8 4.5 9.8 6.5 V8 Q9.8 9.6 7.300000000000001 9.6 Q9.8 9.6 9.8 11.2 V12.8 Q9.8 14.8 11.8 14.8" stroke-width="1.1"/></g><g transform="translate(192 374)"><path d="M8.3 4.5 Q10.3 4.5 10.3 6.5 V8 Q10.3 9.6 12.8 9.6 Q10.3 9.6 10.3 11.2 V12.8 Q10.3 14.8 8.3 14.8" stroke-width="1.1"/></g><g transform="translate(72 418)"><path d="M2.5 6.5 H9.5 V2.5 L16.5 9.5 L9.5 16.5 V12.5 H2.5 Z" /></g><g transform="translate(92 418)"><path d="M16.5 6.5 H9.5 V2.5 L2.5 9.5 L9.5 16.5 V12.5 H16.5 Z" /></g><g transform="translate(112 418)"><path d="M6.5 16.5 V9.5 H2.5 L9.5 2.5 L16.5 9.5 H12.5 V16.5 Z" /></g><g transform="translate(132 418)"><path d="M6.5 2.5 V9.5 H2.5 L9.5 16.5 L16.5 9.5 H12.5 V2.5 Z" /></g><g transform="translate(152 418)"><path d="M2 10 L6.5 3 V7.5 H13.5 V3 L18 10 L13.5 17 V12.5 H6.5 V17 Z" /></g><g transform="translate(172 418)"><path d="M10 2.5 L17 7 H12.5 V13.5 H17 L10 18 L2.5 13.5 H7.5 V7 H2.5 Z" /></g><g transform="translate(192 418)"><path d="M9.5 3 L12.5 6 H10.5 V9.5 H14 V7.5 L17 10.5 L14 13.5 V11.5 H10.5 V15 H12.5 L9.5 18 L6.5 15 H8.5 V11.5 H5 V13.5 L2 10.5 L5 7.5 V9.5 H8.5 V6 H6.5 Z" /></g><g transform="translate(212 418)"><path d="M10 2 L13 5.5 H11 V12 H15 V10 L18 13.5 L15 17 V15 H5 V17 L2 13.5 L5 10 V12 H9 V5.5 H7 Z" /></g><g transform="translate(232 418)"><path d="M3.5 17.5 V9.5 Q3.5 6.5 6.5 6.5 H12.5 V3.5 L17 8 L12.5 12.5 V9.5 H7.5 Q6.5 9.5 6.5 10.5 V17.5 Z" /></g><g transform="translate(252 418)"><path d="M3 16.5 V9.5 A6.5 6.5 0 0 1 16 9.5 V10 H17 L13 13.5 L9 10 H12.8 V9.5 A3.3 3.3 0 0 0 6.2 9.5 V16.5 Z" /></g><g transform="translate(272 418)"><path d="M12.9 2.7 L17 6.5 H14.6 V14.6 H6 V16.5 L3 13 L6 9.5 V11.6 H11.3 V6.5 H9 Z" /></g><g transform="translate(292 418)"><path d="M11.8 3.8 L16 7.6 H13.7 V15.7 H2.3 V12.4 H10.8 V7.6 H7.8 Z" /></g><g transform="translate(72 438)"><path d="M13.5 2.3 V5.5 C9.5 5.5 7 7.5 7.3 9.5 C7.6 11 9 12 10.3 12.3 V10.8 L14.8 14.2 L10.8 17.3 V15.3 C7.5 14.8 5 12.3 5 9.3 C5 5 8.5 2.3 13.5 2.3 Z M13.5 5.5 C10 6 6 7.5 5.2 9.5" stroke-width="0.95"/></g><g transform="translate(92 438)"><path d="M6.5 2.3 V5.5 C10.5 5.5 13 7.5 12.7 9.5 C12.4 11 11 12 9.7 12.3 V10.8 L5.2 14.2 L9.2 17.3 V15.3 C12.5 14.8 15 12.3 15 9.3 C15 5 11.5 2.3 6.5 2.3 Z M6.5 5.5 C10 6 14 7.5 14.8 9.5" stroke-width="0.95"/></g><g transform="translate(112 438)"><path d="M2.3 5.3 H5.5 C6.3 9.3 8.5 11 10.5 11 C11.8 11 13 10 13.6 8.8 L12.2 7.8 L17.8 5.8 L16.7 11.6 L15.5 10.6 C14.5 12.3 12.8 13.5 10.5 13.5 C6 13.5 2.8 10 2.3 5.3 Z M5.5 5.3 C6.5 10.5 10 13 13.5 12.5" stroke-width="0.95"/></g><g transform="translate(132 438)"><path d="M2.3 14 C2.5 8.3 6 5.3 9.8 5.3 C12.8 5.3 14.8 7.3 15.6 9.8 L17.6 9.6 L14.6 14.8 L10.4 10.6 L12.8 10.3 C12.2 8.8 11.2 8 9.8 8 C7.3 8 5.5 10.5 5.5 14 Z M9.8 5.3 C12.5 6 14.5 8.5 14.6 11" stroke-width="0.95"/></g><g transform="translate(152 438)"><path d="M2.5 6.5 V13.5 M4.5 6.5 V13.5 M6.5 6.5 H9.5 V2.5 L16.5 10 L9.5 17 V13.5 H6.5 Z" /></g><g transform="translate(172 438)"><path d="M2.5 6.5 H9.5 V2.5 L16.5 10 L9.5 17 V13.5 H2.5 L5.5 10 Z" /></g><g transform="translate(192 438)"><path d="M2.5 5.5 H12.5 L17.5 10.5 L12.5 15.5 H2.5 Z" /></g><g transform="translate(212 438)"><path d="M4.5 5.5 H11.5 L16 10.5 L11.5 15.5 H4.5 L9 10.5 Z" /></g><g transform="translate(232 438)"><path d="M2.5 3.5 H11.5 V8 H13.5 V5.5 L17.5 10.5 L13.5 15.5 V13 H11.5 V17.5 H2.5 Z" /></g><g transform="translate(252 438)"><path d="M2.5 2.5 H17.5 V11.5 H13 V13.5 H15.5 L10 18 L4.5 13.5 H7 V11.5 H2.5 Z" /></g><g transform="translate(272 438)"><path d="M17.5 3.5 H8.5 V8 H6.5 V5.5 L2.5 10.5 L6.5 15.5 V13 H8.5 V17.5 H17.5 Z" /></g><g transform="translate(292 438)"><path d="M2.5 17.5 H17.5 V8.5 H13 V6.5 H15.5 L10 2 L4.5 6.5 H7 V8.5 H2.5 Z" /></g><g transform="translate(72 458)"><path d="M7 2 H13 V8 H15 V6 L18 10 L15 14 V12 H13 V18 H7 V12 H5 V14 L2 10 L5 6 V8 H7 Z" /></g><g transform="translate(92 458)"><path d="M7 6 H8.5 V4.5 H7.5 L10 2 L12.5 4.5 H11.5 V6 H13 V7.5 H14.5 V6.5 L17.5 10 L14.5 13.5 V12.5 H13 V14 H11.5 V15.5 H12.5 L10 18 L7.5 15.5 H8.5 V14 H7 V12.5 H5.5 V13.5 L2.5 10 L5.5 6.5 V7.5 H7 Z" /></g><g transform="translate(112 458)"><path d="M3 14.5 V10 C3 5 6 3.5 9 3.5 C12 3.5 15 5 15 10 H17 L13.5 15 L10 10 H12 C12 7.5 11 6.5 9 6.5 C7 6.5 6 8 6 10.5 V14.5 Z" /></g><g transform="translate(72 502)"><path d="M8 3.5 H12 V8.5 H16.5 V12.5 H12 V17 H8 V12.5 H3.5 V8.5 H8 Z" /></g><g transform="translate(92 502)"><path d="M3.5 8.5 H16.5 V12.5 H3.5 Z" /></g><g transform="translate(112 502)"><path d="M5.5 4 L10 8 L14.5 4 L16.5 6 L12 10 L16.5 14 L14.5 16 L10 12 L5.5 16 L3.5 14 L8 10 L3.5 6 Z" /></g><g transform="translate(132 502)"><path d="M3.5 9 H16 V11.5 H3.5 Z" /><circle cx="9.8" cy="5.5" r="1.2"/><circle cx="9.8" cy="15" r="1.2"/></g><g transform="translate(152 502)"><path d="M3.5 6.5 H16.5 V9.5 H3.5 Z M3.5 11.5 H16.5 V14.5 H3.5 Z" /></g><g transform="translate(172 502)"><path d="M3.5 6.5 H16.5 V9.5 H3.5 Z M3.5 11.5 H16.5 V14.5 H3.5 Z M3.5 17.5 L14.5 3.5 H16.5 L5.5 17.5 Z" /></g><g transform="translate(72 546)"><path d="M2.5 4.5 H17.5 V15.5 H2.5 Z" /></g><g transform="translate(92 546)"><rect x="2.5" y="4.5" width="15" height="11" rx="3"/></g><g transform="translate(112 546)"><path d="M2 10 L10 5.5 L18 10 L10 14.5 Z" /></g><g transform="translate(132 546)"><path d="M6 4.5 H17.5 L14 15.5 H2.5 Z" /></g><g transform="translate(152 546)"><path d="M2.5 4.5 H17.5 V16.5 H2.5 Z M5 4.5 V16.5 M15 4.5 V16.5" /></g><g transform="translate(172 546)"><path d="M3.5 4.5 H15.5 V16.5 H3.5 Z M3.5 6.5 H15.5 M5.5 4.5 V16.5" /></g><g transform="translate(192 546)"><path d="M2.5 3.5 H17.5 V14 C13 13 10 17.5 6 16.5 C4.5 16 3.5 15.5 2.5 15 Z" /></g><g transform="translate(212 546)"><path d="M2.5 8.5 H12.5 V15 C10 14.2 7.5 17 5 16.5 C4 16.3 3 16 2.5 15.8 Z M4.5 8.5 V6.5 H14.5 V13.3 H12.5 M6.5 6.5 V4.5 H16.5 V11.5 H14.5" /></g><g transform="translate(232 546)"><rect x="2.5" y="7" width="15" height="6.5" rx="3.25"/></g><g transform="translate(252 546)"><path d="M6 5 H13.5 L17.5 10.3 L13.5 15.7 H6 L2.5 10.3 Z" /></g><g transform="translate(272 546)"><path d="M2.5 7.5 L17.5 4 V15.7 H2.5 Z" /></g><g transform="translate(292 546)"><path d="M2.5 3.5 H17.5 L14.5 15.7 H6 Z" /></g><g transform="translate(72 566)"><circle cx="9.8" cy="10" r="4.8"/></g><g transform="translate(92 566)"><path d="M4 5 H14.5 V11.5 L9.2 15.5 L4 11.5 Z" /></g><g transform="translate(112 566)"><path d="M6 4.5 H17.5 V15.5 H2.5 V8 Z" /></g><g transform="translate(132 566)"><path d="M2.5 5 C5 7 7.5 7 10 5 C12.5 3 15 3 17.5 5 V15.5 C15 13.5 12.5 13.5 10 15.5 C7.5 17.5 5 17.5 2.5 15.5 Z" /></g><g transform="translate(152 566)"><circle cx="9.4" cy="10.3" r="7"/><path d="M4.5 5.3 L14.3 15.3 M14.3 5.3 L4.5 15.3" /></g><g transform="translate(172 566)"><circle cx="9.6" cy="10.3" r="7"/><path d="M9.6 3.3 V17.3 M2.6 10.3 H16.6" /></g><g transform="translate(192 566)"><path d="M5.3 3.5 H13.8 L5.3 17.3 H13.8 Z" /></g><g transform="translate(212 566)"><path d="M10.5 3 L14.8 10.2 L10.5 17.3 L6.2 10.2 Z M6.2 10.2 H14.8" /></g><g transform="translate(232 566)"><path d="M10 3 L16.5 16.5 H3 Z" /></g><g transform="translate(252 566)"><path d="M3.5 3.5 H16.5 L10 16.5 Z" /></g><g transform="translate(272 566)"><path d="M5.5 4.5 H17.5 C15.5 6 15.5 14 17.5 15.5 H5.5 C1.5 14 1.5 6 5.5 4.5 Z" /></g><g transform="translate(292 566)"><path d="M2.5 3.5 H9.5 A7 7 0 0 1 9.5 17.5 H2.5 Z" /></g><g transform="translate(72 586)"><path d="M9.8 17.5 A7.5 7.5 0 1 1 15 15.5 L18 17.5 Z" /></g><g transform="translate(92 586)"><path d="M2.5 6 V13.5" /><ellipse cx="10" cy="6" rx="7.5" ry="2.8"/><path d="M2.5 6 V13.5 A7.5 2.8 0 0 0 17.5 13.5 V6" /></g><g transform="translate(112 586)"><path d="M7 3 H13 A3 7.5 0 0 1 13 18 H7 A3 7.5 0 0 1 7 3 Z M13 3 A3 7.5 0 0 0 13 18" /></g><g transform="translate(132 586)"><path d="M5.5 2.5 H12 A6 7.5 0 0 1 12 17.5 H5.5 L2.5 10 Z" /></g><g transform="translate(72 630)"><path d="M3.5 6 L7 8 L8.5 3.5 L10 7.5 L13.5 3 L13 8 L17 9 L14 11 L17.5 14.5 L13 13.5 L12.5 17.5 L10 14 L7.5 17.5 L7 13.5 L3 14.5 L5.5 11 L2.5 9 Z" /></g><g transform="translate(92 630)"><path d="M4 5 L7.5 7 L8.5 3 L10.5 6 L13 2.5 L13.5 6.5 L17 6 L15.5 9 L18 11.5 L15 12.5 L16 16 L12.5 14.5 L11 18 L9 15 L6 17 L6 13.5 L2.5 13 L4.5 10.5 L2.5 8 L5.5 8 Z" /></g><g transform="translate(112 630)"><path d="M9.60 1.70 L11.23 7.57 L17.10 9.20 L11.23 10.83 L9.60 16.70 L7.97 10.83 L2.10 9.20 L7.97 7.57 Z" /></g><g transform="translate(132 630)"><path d="M9.60 3.00 L11.66 7.67 L16.73 8.18 L12.93 11.58 L14.01 16.57 L9.60 14.00 L5.19 16.57 L6.27 11.58 L2.47 8.18 L7.54 7.67 Z" /></g><g transform="translate(152 630)"><path d="M10.00 2.00 L12.50 5.67 L16.93 6.00 L15.00 10.00 L16.93 14.00 L12.50 14.33 L10.00 18.00 L7.50 14.33 L3.07 14.00 L5.00 10.00 L3.07 6.00 L7.50 5.67 Z" /></g><g transform="translate(172 630)"><path d="M10.00 2.20 L12.43 4.95 L16.10 5.14 L15.46 8.75 L17.60 11.74 L14.38 13.49 L13.38 17.03 L10.00 15.60 L6.62 17.03 L5.62 13.49 L2.40 11.74 L4.54 8.75 L3.90 5.14 L7.57 4.95 Z" /></g><g transform="translate(192 630)"><path d="M9.50 1.60 L11.76 3.95 L15.02 3.88 L14.95 7.14 L17.30 9.40 L14.95 11.66 L15.02 14.92 L11.76 14.85 L9.50 17.20 L7.24 14.85 L3.98 14.92 L4.05 11.66 L1.70 9.40 L4.05 7.14 L3.98 3.88 L7.24 3.95 Z" /><text x="9.5" y="11.9" font-size="7" font-family="Liberation Sans" font-weight="bold" fill="#5E5E5E" stroke="none" text-anchor="middle">8</text></g><g transform="translate(212 630)"><path d="M9.80 1.60 L11.65 3.69 L14.38 3.09 L14.65 5.87 L17.22 6.99 L15.80 9.40 L17.22 11.81 L14.65 12.93 L14.38 15.71 L11.65 15.11 L9.80 17.20 L7.95 15.11 L5.22 15.71 L4.95 12.93 L2.38 11.81 L3.80 9.40 L2.38 6.99 L4.95 5.87 L5.22 3.09 L7.95 3.69 Z" /><text x="9.8" y="11.9" font-size="7" font-family="Liberation Sans" font-weight="bold" fill="#5E5E5E" stroke="none" text-anchor="middle">10</text></g><g transform="translate(232 630)"><path d="M9.60 1.50 L11.18 3.51 L13.55 2.56 L13.91 5.09 L16.44 5.45 L15.49 7.82 L17.50 9.40 L15.49 10.98 L16.44 13.35 L13.91 13.71 L13.55 16.24 L11.18 15.29 L9.60 17.30 L8.02 15.29 L5.65 16.24 L5.29 13.71 L2.76 13.35 L3.71 10.98 L1.70 9.40 L3.71 7.82 L2.76 5.45 L5.29 5.09 L5.65 2.56 L8.02 3.51 Z" stroke-width="0.9"/><text x="9.6" y="11.9" font-size="7" font-family="Liberation Sans" font-weight="bold" fill="#5E5E5E" stroke="none" text-anchor="middle">12</text></g><g transform="translate(252 630)"><path d="M9.40 1.40 L10.59 3.42 L12.46 2.01 L12.79 4.33 L15.06 3.74 L14.47 6.01 L16.79 6.34 L15.38 8.21 L17.40 9.40 L15.38 10.59 L16.79 12.46 L14.47 12.79 L15.06 15.06 L12.79 14.47 L12.46 16.79 L10.59 15.38 L9.40 17.40 L8.21 15.38 L6.34 16.79 L6.01 14.47 L3.74 15.06 L4.33 12.79 L2.01 12.46 L3.42 10.59 L1.40 9.40 L3.42 8.21 L2.01 6.34 L4.33 6.01 L3.74 3.74 L6.01 4.33 L6.34 2.01 L8.21 3.42 Z" stroke-width="0.8"/><text x="9.4" y="11.9" font-size="7" font-family="Liberation Sans" font-weight="bold" fill="#5E5E5E" stroke="none" text-anchor="middle">16</text></g><g transform="translate(272 630)"><path d="M9.70 1.40 L10.54 3.05 L11.77 1.67 L12.15 3.49 L13.70 2.47 L13.60 4.32 L15.36 3.74 L14.78 5.50 L16.63 5.40 L15.61 6.95 L17.43 7.33 L16.05 8.56 L17.70 9.40 L16.05 10.24 L17.43 11.47 L15.61 11.85 L16.63 13.40 L14.78 13.30 L15.36 15.06 L13.60 14.48 L13.70 16.33 L12.15 15.31 L11.77 17.13 L10.54 15.75 L9.70 17.40 L8.86 15.75 L7.63 17.13 L7.25 15.31 L5.70 16.33 L5.80 14.48 L4.04 15.06 L4.62 13.30 L2.77 13.40 L3.79 11.85 L1.97 11.47 L3.35 10.24 L1.70 9.40 L3.35 8.56 L1.97 7.33 L3.79 6.95 L2.77 5.40 L4.62 5.50 L4.04 3.74 L5.80 4.32 L5.70 2.47 L7.25 3.49 L7.63 1.67 L8.86 3.05 Z" stroke-width="0.7"/><text x="9.7" y="11.9" font-size="7" font-family="Liberation Sans" font-weight="bold" fill="#5E5E5E" stroke="none" text-anchor="middle">24</text></g><g transform="translate(292 630)"><path d="M9.50 1.40 L10.14 2.93 L11.06 1.55 L11.39 3.18 L12.56 2.01 L12.56 3.67 L13.94 2.75 L13.62 4.38 L15.16 3.74 L14.52 5.28 L16.15 4.96 L15.23 6.34 L16.89 6.34 L15.72 7.51 L17.35 7.84 L15.97 8.76 L17.50 9.40 L15.97 10.04 L17.35 10.96 L15.72 11.29 L16.89 12.46 L15.23 12.46 L16.15 13.84 L14.52 13.52 L15.16 15.06 L13.62 14.42 L13.94 16.05 L12.56 15.13 L12.56 16.79 L11.39 15.62 L11.06 17.25 L10.14 15.87 L9.50 17.40 L8.86 15.87 L7.94 17.25 L7.61 15.62 L6.44 16.79 L6.44 15.13 L5.06 16.05 L5.38 14.42 L3.84 15.06 L4.48 13.52 L2.85 13.84 L3.77 12.46 L2.11 12.46 L3.28 11.29 L1.65 10.96 L3.03 10.04 L1.50 9.40 L3.03 8.76 L1.65 7.84 L3.28 7.51 L2.11 6.34 L3.77 6.34 L2.85 4.96 L4.48 5.28 L3.84 3.74 L5.38 4.38 L5.06 2.75 L6.44 3.67 L6.44 2.01 L7.61 3.18 L7.94 1.55 L8.86 2.93 Z" stroke-width="0.65"/><text x="9.5" y="11.9" font-size="7" font-family="Liberation Sans" font-weight="bold" fill="#5E5E5E" stroke="none" text-anchor="middle">32</text></g><g transform="translate(72 650)"><path d="M6.5 4 H13.5 V6.8 H17.6 L15.5 10.2 L17.6 13.7 H13.5 V12.7 H6.5 V13.7 H2.3 L4.4 10.2 L2.3 6.8 H6.5 Z M6.5 6.8 V12.7 M13.5 6.8 V12.7" /></g><g transform="translate(92 650)"><path d="M6.5 13.3 H13.5 V10.5 H17.7 L15.6 7.2 L17.7 4 H13.5 V5 H6.5 V4 H2.2 L4.3 7.2 L2.2 10.5 H6.5 Z M6.5 5 V10.5 M13.5 5 V10.5" /></g><g transform="translate(112 650)"><path d="M6.5 8 C6.5 2.8 13.5 2.8 13.5 8 H17.8 L15.7 11.4 L17.8 14.8 H13.5 V11.5 C13.5 9 6.5 9 6.5 11.5 V14.8 H2.2 L4.3 11.4 L2.2 8 H6.5 Z M6.5 8 V11.5 M13.5 8 V11.5" /></g><g transform="translate(132 650)"><path d="M6.5 10 C6.5 15.5 13.5 15.5 13.5 10 H17.8 L15.7 6.6 L17.8 3.2 H13.5 V6 C13.5 8.5 6.5 8.5 6.5 6 V3.2 H2.2 L4.3 6.6 L2.2 10 H6.5 Z M6.5 6 V10 M13.5 6 V10" /></g><g transform="translate(152 650)"><path d="M6 3 H16 V5 H14 V15.5 C14 17 12 17.5 10 17.5 H4.5 V16 H6 V5 C6 4 6 3 7.5 3 M6 5 H14 M4.5 16 C4.5 15 6 15 6 16" /></g><g transform="translate(172 650)"><path d="M4 7 V17.5 H6 V15.5 H17 V5 C17 4 16 3.5 15 3.5 H6 V6 H4.5 C4 6 4 6.5 4 7 Z M6 6 V15.5 M15 3.5 V6 H17" /></g><g transform="translate(192 650)"><path d="M2.5 4 C6 0.5 10 7 17.5 3.5 V15 C13 18.5 8 11.5 2.5 15 Z" /></g><g transform="translate(212 650)"><path d="M2.5 4.5 C5 2.5 7 6 10 4 C13 2 15 6 17.5 4.5 V16 C15 18 13 14 10 16 C7 18 5 14 2.5 16 Z" /></g><g transform="translate(72 694)"><path d="M3.5 2.5 H17 V13 H8 L5.5 16 L5.5 13 H3.5 Z" /></g><g transform="translate(92 694)"><path d="M6 2.5 H14.5 Q17 2.5 17 5 V10.5 Q17 13 14.5 13 H11 L9 16 L8 13 H6 Q3.5 13 3.5 10.5 V5 Q3.5 2.5 6 2.5 Z" /></g><g transform="translate(112 694)"><path d="M6 13 C1 11 1.5 2.5 9.5 2.5 C17 2.5 18 11.5 10 12.8 L5.5 16 Z" /></g><g transform="translate(132 694)"><path d="M5 10.5 C2.5 10.5 2 7.5 4 6.5 C3.5 4 6.5 3 8 4 C9 2 12.5 2 13.5 3.5 C15.5 2.5 18 4.5 17 6.5 C18.5 8 17.5 11 15.5 11 C15 13.5 12 14 11 12.5 C9.5 14.5 6.5 14 6 12 C5 12 5 11 5 10.5 Z" /><circle cx="5" cy="14" r="0.6" fill="#5E5E5E"/><circle cx="3.3" cy="15.8" r="0.6" fill="#5E5E5E"/></g><g transform="translate(152 694)"><path d="M9.5 4.5 H17.5 V12.5 H9.5 Z M2.5 13.8 L9.3 4.8" /></g><g transform="translate(172 694)"><path d="M9.5 4.5 H17.5 V12.5 H9.5 Z M2.5 13.8 L4 8.5 H9.5" /></g><g transform="translate(192 694)"><path d="M9.5 4.5 H17.5 V12.5 H9.5 Z M9.5 8.5 H3.5 V15 L9.5 17.5" /></g><g transform="translate(212 694)"><path d="M9 4.5 H18 M17.5 6 V13 M16 12.5 H9 " stroke-dasharray="1 1"/><path d="M7.9 4 V13 M2.5 13.8 L7.9 8.2" stroke-width="1.2"/></g><g transform="translate(232 694)"><path d="M10 4.5 H18 M17.5 6 V13 M16 12.5 H10 " stroke-dasharray="1 1"/><path d="M8 4 V13" stroke-width="1.2"/><path d="M2.5 13.8 L4 8.5 H8" /></g><g transform="translate(252 694)"><path d="M10 4.5 H18 M17.5 6 V13 M16 12.5 H10 " stroke-dasharray="1 1"/><path d="M8 4 V13" stroke-width="1.2"/><path d="M8 8.5 H3.7 V15 L9.5 17.5" /></g><g transform="translate(272 694)"><path d="M8 4.5 H18 M17.5 6 V13 M16 12.5 H8 M8.5 11 V4" stroke-dasharray="1 1"/><path d="M2.5 13.8 L8.5 8.3" /></g><g transform="translate(292 694)"><path d="M8 4.5 H18 M17.5 6 V13 M16 12.5 H8 M8.5 11 V4" stroke-dasharray="1 1"/><path d="M3.3 14 L5 8.5 H8" /></g><g transform="translate(72 714)"><path d="M8 4.5 H18 M17.5 6 V13 M16 12.5 H8 M8.5 11 V4" stroke-dasharray="1 1"/><path d="M8 8.5 H3.5 V15 L9.5 17.5" /></g><g transform="translate(92 714)"><path d="M11 4.5 H17.5 V12.5 H11 Z M9.5 4.5 V12.5 M2.5 13.8 L9.5 6.5" /></g><g transform="translate(112 714)"><path d="M10.5 4.5 H17.5 V12.5 H10.5 Z M9 4.5 V12.5 M2.5 13.8 L4 8.5 H9" /></g><g transform="translate(132 714)"><path d="M10.5 4.5 H17.5 V12.5 H10.5 Z M9 4.5 V12.5 M9 8.5 H3.5 V15 L9.5 17.5" /></g><g transform="translate(72 758)"><path d="M2.5 2.5 H17.5 V17.5 H2.5 Z" /><path d="M5 10 L13 5.5 V14.5 Z" /></g><g transform="translate(92 758)"><path d="M2.5 2.5 H17.5 V17.5 H2.5 Z" /><path d="M14.5 10 L6.5 5.5 V14.5 Z" /></g><g transform="translate(112 758)"><path d="M2.5 2.5 H17.5 V17.5 H2.5 Z" /><path d="M6.5 5.5 V14.5 M15 5.5 L8 10 L15 14.5 Z" /></g><g transform="translate(132 758)"><path d="M2.5 2.5 H17.5 V17.5 H2.5 Z" /><path d="M13.5 5.5 V14.5 M5 5.5 L12 10 L5 14.5 Z" /></g><g transform="translate(152 758)"><path d="M2.5 2.5 H17.5 V17.5 H2.5 Z" /><path d="M5 15.5 V9.5 L10 5 L15 9.5 V15.5 Z M8.5 15.5 V11.5 H11.5 V15.5 M13 7 V4.5 H14.5 V8.5" /></g><g transform="translate(172 758)"><path d="M2.5 2.5 H17.5 V17.5 H2.5 Z" /><circle cx="10" cy="10" r="5"/><text x="10" y="12.8" font-size="7.5" font-family="Liberation Sans" font-weight="bold" fill="#5E5E5E" stroke="none" text-anchor="middle">i</text></g><g transform="translate(192 758)"><path d="M2.5 2.5 H17.5 V17.5 H2.5 Z" /><path d="M6 8 V11 C6 14.5 13 14.5 13 11 V7 H15 L12 4 L9 7 H11 V11 C11 12 8 12 8 11 V8 Z" /></g><g transform="translate(212 758)"><path d="M2.5 2.5 H17.5 V17.5 H2.5 Z" /><path d="M5 7 H12 V12.5 H5 Z M12 9 L15 7 V12.5 L12 10.5 M5 8.5 H10.5" stroke-width="1"/></g><g transform="translate(232 758)"><path d="M2.5 2.5 H17.5 V17.5 H2.5 Z" /><path d="M6.5 4.5 H11 L14 7.5 V15.5 H6.5 Z M11 4.5 V7.5 H14" /></g><g transform="translate(252 758)"><path d="M2.5 2.5 H17.5 V17.5 H2.5 Z" /><path d="M5 8 H7.5 L11 5 V15 L7.5 12 H5 Z M13 6 L14.5 5 M13.5 10 H15.5 M13 14 L14.5 15" stroke-width="1"/></g><g transform="translate(272 758)"><path d="M2.5 2.5 H17.5 V17.5 H2.5 Z" /><text x="10" y="14.8" font-size="12" font-family="Liberation Sans" font-weight="bold" fill="#5E5E5E" stroke="none" text-anchor="middle">?</text></g><g transform="translate(292 758)"><path d="M2.5 2.5 H17.5 V17.5 H2.5 Z" stroke="#9A9A9A"/></g></g></svg>
<svg class="a" style="left:318px;top:778px" width="10" height="10"><rect x="6" y="2" width="2" height="2" fill="#8A8A8A"/><rect x="2" y="6" width="2" height="2" fill="#8A8A8A"/><rect x="6" y="6" width="2" height="2" fill="#8A8A8A"/></svg>
</body></html>
